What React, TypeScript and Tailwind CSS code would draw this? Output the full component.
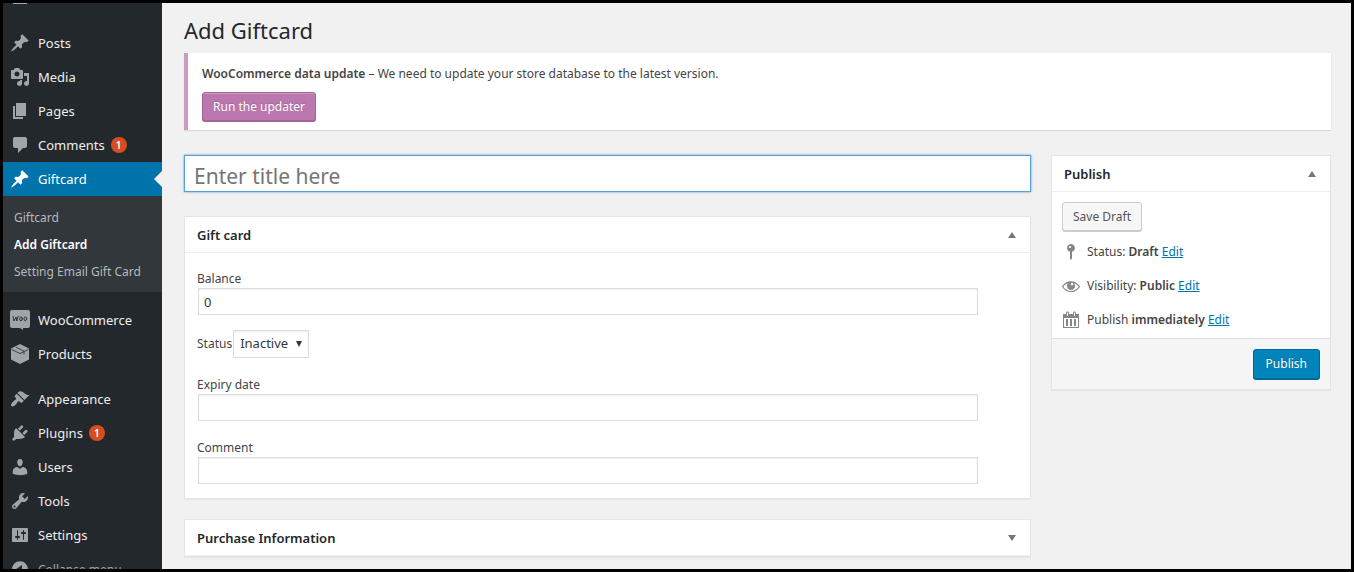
import { useId, useState } from "react";
import type { ReactNode } from "react";

// 20x20 glyphs of the admin icon set
const ICONS = {
  pin: "M10.44 3.02l1.82-1.82 6.36 6.35-1.83 1.82c-1.05-.68-2.48-.57-3.41.36l-.75.75c-.92.93-1.04 2.35-.35 3.41l-1.83 1.82-2.41-2.41-2.8 2.79c-.42.42-3.38 2.71-3.8 2.29s1.86-3.39 2.28-3.81l2.79-2.79L4.1 9.36l1.83-1.82c1.05.69 2.48.57 3.4-.36l.75-.75c.93-.92 1.05-2.35.36-3.41z",
  media: "M13 11V4c0-.55-.45-1-1-1h-1.67L9 1H5L3.67 3H2c-.55 0-1 .45-1 1v7c0 .55.45 1 1 1h10c.55 0 1-.45 1-1zM7 4.5c1.38 0 2.5 1.12 2.5 2.5S8.38 9.5 7 9.5 4.5 8.38 4.5 7 5.62 4.5 7 4.5zM14 6h5v10.5c0 1.38-1.12 2.5-2.5 2.5S14 17.88 14 16.5s1.12-2.5 2.5-2.5c.17 0 .34.02.5.05V9h-3V6zm-4 8.05V13h2v3.5c0 1.38-1.12 2.5-2.5 2.5S7 17.88 7 16.5 8.12 14 9.5 14c.17 0 .34.02.5.05z",
  page: "M6 15V2h10v13H6zm-1 1h8v2H3V5h2v11z",
  comment: "M5 2h10c1.1 0 2 .9 2 2v7c0 1.1-.9 2-2 2h-2l-5 5v-5H5c-1.1 0-2-.9-2-2V4c0-1.1.9-2 2-2z",
  appearance: "M14.48 11.06L7.41 3.99l1.5-1.5c.5-.56 2.3-.47 3.51.32 1.21.8 1.43 1.28 2.91 2.1 1.18.64 2.45 1.26 4.45.85zm-.71.71L6.7 4.7 4.93 6.47c-.39.39-.39 1.02 0 1.41l1.06 1.06c.39.39.39 1.03 0 1.42-.6.6-1.43 1.11-2.21 1.69-.35.26-.7.53-1.01.84C1.43 14.23.4 16.08 1.4 17.07c.99 1 2.84-.03 4.18-1.36.31-.31.58-.66.85-1.02.57-.78 1.08-1.61 1.69-2.21.39-.39 1.02-.39 1.41 0l1.06 1.06c.39.39 1.02.39 1.41 0z",
  plugins: "M13.11 4.36L9.87 7.6 8 5.73l3.24-3.24c.35-.34 1.05-.2 1.56.32.52.51.66 1.21.31 1.55zm-8 1.77l.91-1.12 9.01 9.01-1.19.84c-.71.71-2.63 1.16-3.82 1.16H6.14L4.9 17.26c-.59.59-1.54.59-2.12 0-.59-.58-.59-1.53 0-2.12l1.24-1.24v-3.88c0-1.13.4-3.19 1.09-3.89zm7.26 3.97l3.24-3.24c.34-.35 1.04-.21 1.55.31.52.51.66 1.21.31 1.55l-3.24 3.25z",
  users: "M10 9.25c-2.27 0-2.73-3.44-2.73-3.44C7 4.02 7.82 2 9.97 2c2.16 0 2.98 2.02 2.71 3.81 0 0-.41 3.44-2.68 3.44zm0 2.57L12.72 10c2.39 0 4.52 2.33 4.52 4.53v2.49s-3.65 1.13-7.24 1.13c-3.65 0-7.24-1.13-7.24-1.13v-2.49c0-2.25 1.94-4.48 4.47-4.48z",
  tools: "M16.68 9.77c-1.34 1.34-3.3 1.67-4.95.99l-5.41 6.52c-.99.99-2.59.99-3.58 0s-.99-2.59 0-3.57l6.52-5.42c-.68-1.65-.35-3.61.99-4.95 1.28-1.28 3.12-1.62 4.72-1.06l-2.89 2.89 2.82 2.82 2.86-2.87c.53 1.58.18 3.39-1.08 4.65zM3.81 16.21c.4.39 1.04.39 1.43 0 .4-.4.4-1.04 0-1.43-.39-.4-1.03-.4-1.43 0-.39.39-.39 1.03 0 1.43z",
  settings: "M18 16V4c0-.55-.45-1-1-1H3c-.55 0-1 .45-1 1v12c0 .55.45 1 1 1h14c.55 0 1-.45 1-1zM8 11h1c.55 0 1 .45 1 1s-.45 1-1 1H8v1.5c0 .28-.22.5-.5.5s-.5-.22-.5-.5V13H6c-.55 0-1-.45-1-1s.45-1 1-1h1V5.5c0-.28.22-.5.5-.5s.5.22.5.5V11zm5-2h-1c-.55 0-1-.45-1-1s.45-1 1-1h1V5.5c0-.28.22-.5.5-.5s.5.22.5.5V7h1c.55 0 1 .45 1 1s-.45 1-1 1h-1v5.5c0 .28-.22.5-.5.5s-.5-.22-.5-.5V9z",
  collapse: "M10 2.16c4.33 0 7.84 3.51 7.84 7.84s-3.51 7.84-7.84 7.84S2.16 14.33 2.16 10 5.67 2.16 10 2.16zm2 11.72V6.12L6.18 9.97z",
  status: "M14 6c0 1.86-1.28 3.41-3 3.86V16c0 1-2 2-2 2V9.86c-1.72-.45-3-2-3-3.86 0-2.21 1.79-4 4-4s4 1.79 4 4zM8 5c0 .55.45 1 1 1s1-.45 1-1-.45-1-1-1-1 .45-1 1z",
  visibility: "M18.3 9.5C15 4.9 8.5 3.8 3.9 7.2c-1.2.9-2.2 2.1-3 3.4.2.4.5.8.8 1.2 3.3 4.6 9.6 5.6 14.2 2.4.9-.7 1.7-1.4 2.4-2.4.3-.4.5-.8.8-1.2-.3-.4-.5-.8-.8-1.1zm-8.2-2.3c.5-.5 1.3-.5 1.8 0s.5 1.3 0 1.8-1.3.5-1.8 0-.5-1.3 0-1.8zm-.1 7.7c-3.1 0-6-1.6-7.7-4.2C3.5 9 5.1 7.8 7 7.2c-.7.8-1 1.7-1 2.7 0 2.2 1.7 4.1 4 4.1 2.2 0 4.1-1.7 4.1-4v-.1c0-1-.4-2-1.1-2.7 1.9.6 3.5 1.8 4.7 3.5-1.7 2.6-4.6 4.2-7.7 4.2z",
  calendar: "M15 4h3v14H2V4h3V3c0-.83.67-1.5 1.5-1.5S8 2.17 8 3v1h4V3c0-.83.67-1.5 1.5-1.5S15 2.17 15 3v1zM6 3v2.5c0 .28.22.5.5.5s.5-.22.5-.5V3c0-.28-.22-.5-.5-.5S6 2.72 6 3zm7 0v2.5c0 .28.22.5.5.5s.5-.22.5-.5V3c0-.28-.22-.5-.5-.5s-.5.22-.5.5zm4 14V8H3v9h14zM7 16V9H5v7h2zm4 0V9H9v7h2zm4 0V9h-2v7h2z",
};

function Icon({ name }: { name: keyof typeof ICONS }) {
  return (
    <svg viewBox="0 0 20 20" className="size-5 shrink-0" fill="currentColor" fillRule="evenodd" aria-hidden="true">
      <path d={ICONS[name]} />
    </svg>
  );
}

function WooIcon() {
  return (
    <svg viewBox="0 0 20 20" className="size-5 shrink-0" aria-hidden="true">
      <path fill="currentColor" d="M2 0h16a2 2 0 0 1 2 2v14a2 2 0 0 1-2 2h-5v2l-3-2H2a2 2 0 0 1-2-2V2a2 2 0 0 1 2-2z" />
      <g fill="none" stroke="#23282d" strokeWidth="0.9" strokeLinecap="round" strokeLinejoin="round">
        <path d="M3 6.5l1 4.5 2-4 .8 4 1.4-4.700" />
        <ellipse cx="11" cy="8.8" rx="1.3" ry="2" />
        <ellipse cx="15.3" cy="8.8" rx="1.3" ry="2" />
      </g>
    </svg>
  );
}

function BoxIcon() {
  return (
    <svg viewBox="0 0 20 20" className="size-5 shrink-0" aria-hidden="true">
      <path fill="currentColor" d="M10 0l9 4.5v11L10 20l-9-4.500V4.500z" />
      <g fill="none" stroke="#23282d" strokeWidth="0.8">
        <path d="M1.500 5.500L10 9.500l8.500-4" />
        <path d="M6 3.200l8 4v3.300" />
      </g>
    </svg>
  );
}

type MenuItemProps = {
  icon: ReactNode;
  label: string;
  count?: number;
  current?: boolean;
};

function MenuItem({ icon, label, count, current }: MenuItemProps) {
  return (
    <a
      href="#"
      className={
        current
          ? "relative flex h-[34px] items-center gap-2 bg-[#0073aa] pl-[7px] text-white"
          : "flex h-[34px] items-center gap-2 pl-[7px] text-[#a0a5aa]"
      }
    >
      {icon}
      <span className={current ? "pt-0.5 text-white" : "pt-0.5 text-[#eeeeee]"}>{label}</span>
      {count && (
        <span className="-ml-0.5 flex h-4 w-4 items-center justify-center rounded-full bg-[#d54e21] text-[10px] font-semibold text-white">
          {count}
        </span>
      )}
      {current && (
        <span className="absolute right-0 top-[9px] border-y-8 border-r-8 border-y-transparent border-r-[#f1f1f1]" />
      )}
    </a>
  );
}

function Sidebar() {
  return (
    <nav className="w-[159px] shrink-0 bg-[#23282d] text-[13px]">
      <div className="h-[23px] pl-2.5">
        <div className="h-px w-3.5 bg-[#a0a5aa]" />
      </div>
      <MenuItem icon={<Icon name="pin" />} label="Posts" />
      <MenuItem icon={<Icon name="media" />} label="Media" />
      <MenuItem icon={<Icon name="page" />} label="Pages" />
      <MenuItem icon={<Icon name="comment" />} label="Comments" count={1} />
      <MenuItem icon={<Icon name="pin" />} label="Giftcard" current />
      <ul className="mb-[11px] bg-[#32373c] pb-[7px] pt-2 text-[12px] leading-[27px] text-[#b4b9be]">
        <li className="pl-[11px]"><a href="#">Giftcard</a></li>
        <li className="pl-[11px]"><a href="#" className="font-semibold text-white">Add Giftcard</a></li>
        <li className="pl-[11px]"><a href="#">Setting Email Gift Card</a></li>
      </ul>
      <MenuItem icon={<WooIcon />} label="WooCommerce" />
      <MenuItem icon={<BoxIcon />} label="Products" />
      <div className="h-[11px]" />
      <MenuItem icon={<Icon name="appearance" />} label="Appearance" />
      <MenuItem icon={<Icon name="plugins" />} label="Plugins" count={1} />
      <MenuItem icon={<Icon name="users" />} label="Users" />
      <MenuItem icon={<Icon name="tools" />} label="Tools" />
      <MenuItem icon={<Icon name="settings" />} label="Settings" />
      <button className="flex h-[34px] items-center gap-2 pl-[7px] text-[12px] text-[#a0a5aa]">
        <Icon name="collapse" />
        <span className="pt-0.5">Collapse menu</span>
      </button>
    </nav>
  );
}

function Postbox({ title, closed = false, children }: { title: string; closed?: boolean; children?: ReactNode }) {
  const [open, setOpen] = useState(!closed);
  return (
    <section className="border border-[#e5e5e5] bg-white shadow-[0_1px_1px_rgba(0,0,0,0.04)]">
      <div className="flex h-9 items-center justify-between border-b border-[#eeeeee] pl-3 pr-3.5">
        <h2 className="pt-0.5 text-[13px] font-semibold text-[#23282d]">{title}</h2>
        <button type="button" aria-label={"Toggle panel: " + title} aria-expanded={open} onClick={() => setOpen(!open)}>
          <svg viewBox="0 0 8 6" className="h-1.5 w-2" fill="#72777c" aria-hidden="true">
            <path d={open ? "M4 0l4 6H0z" : "M0 0h8L4 6z"} />
          </svg>
        </button>
      </div>
      {open && children}
    </section>
  );
}

function TextField({ label, initial = "" }: { label: string; initial?: string }) {
  const id = useId();
  const [value, setValue] = useState(initial);
  return (
    <div>
      <label htmlFor={id} className="block h-5 leading-[22px]">{label}</label>
      <input
        id={id}
        type="text"
        value={value}
        onChange={(e) => setValue(e.target.value)}
        className="ml-px block h-[27px] w-[95%] border border-[#dddddd] bg-white px-[5px] text-[13px] text-[#32373c] shadow-[inset_0_1px_2px_rgba(0,0,0,0.07)] outline-none"
      />
    </div>
  );
}

function GiftCardBox() {
  return (
    <Postbox title="Gift card">
      <div className="px-3 pb-3.5 pt-[15px]">
        <TextField label="Balance" initial="0" />
        <div className="mb-4 mt-[15px] flex items-center gap-px">
          <label htmlFor="status">Status</label>
          <span className="relative">
            <select
              id="status"
              className="block h-7 w-[76px] appearance-none border border-[#dddddd] bg-white pl-1.5 text-[13px] text-[#32373c] shadow-[inset_0_1px_2px_rgba(0,0,0,0.07)]"
            >
              <option>Inactive</option>
              <option>Active</option>
            </select>
            <svg viewBox="0 0 6 6" className="pointer-events-none absolute right-[7px] top-[11px] size-1.5" fill="#32373c" aria-hidden="true">
              <path d="M0 0h6L3 6z" />
            </svg>
          </span>
        </div>
        <div className="flex flex-col gap-4">
          <TextField label="Expiry date" />
          <TextField label="Comment" />
        </div>
      </div>
    </Postbox>
  );
}

function PublishRow({ icon, label, value }: { icon: ReactNode; label: string; value: string }) {
  return (
    <div className="flex h-[34px] items-center gap-1.5 px-[9px]">
      <span className="text-[#82878c]">{icon}</span>
      <p>
        {label} <b className="font-semibold">{value}</b>{" "}
        <a href="#" className="text-[#0073aa] underline">Edit</a>
      </p>
    </div>
  );
}

function PublishBox() {
  return (
    <Postbox title="Publish">
      <div className="px-2.5 pb-1 pt-2.5">
        <button type="button" className="h-[29px] rounded-[3px] border border-[#cccccc] bg-[#f7f7f7] px-2.5 text-[#555555] shadow-[0_1px_0_#cccccc]">
          Save Draft
        </button>
      </div>
      <div className="pb-px">
        <PublishRow icon={<Icon name="status" />} label="Status:" value="Draft" />
        <PublishRow icon={<Icon name="visibility" />} label="Visibility:" value="Public" />
        <PublishRow icon={<Icon name="calendar" />} label="Publish" value="immediately" />
      </div>
      <div className="flex justify-end border-t border-[#dddddd] bg-[#f5f5f5] p-2.5">
        <button
          type="button"
          className="h-[30px] rounded-[3px] border border-[#006799] bg-[#0085ba] px-3 text-white shadow-[0_1px_0_#006799] [text-shadow:0_-1px_1px_#006799]"
        >
          Publish
        </button>
      </div>
    </Postbox>
  );
}

export default function App() {
  const [title, setTitle] = useState("");
  return (
    <div className="flex h-screen overflow-hidden border-[3px] border-black bg-[#f1f1f1] font-['Noto_Sans',sans-serif] text-[12px] text-[#444444]">
      <Sidebar />
      <main className="min-w-0 flex-1 pl-[22px] pr-5 pt-[11px]">
        <h1 className="text-[22px] leading-8 text-[#23282d]">Add Giftcard</h1>

        <div className="mt-[7px] border-l-4 border-[#cc99c2] bg-white px-3.5 pb-[9px] pt-[11px] shadow-[0_1px_1px_rgba(0,0,0,0.1)]">
          <p className="leading-5">
            <strong className="font-semibold">WooCommerce data update</strong> – We need to update your store database to the latest version.
          </p>
          <button
            type="button"
            className="mt-2 block h-[29px] rounded-[3px] border border-[#a36597] bg-[#bb77ae] px-2.5 text-white shadow-[inset_0_1px_0_rgba(255,255,255,0.25),0_1px_0_#a36597] [text-shadow:0_-1px_1px_#a36597]"
          >
            Run the updater
          </button>
        </div>

        <div className="mt-[25px] flex items-start gap-5">
          <div className="flex min-w-0 flex-1 flex-col">
            <input
              type="text"
              aria-label="Title"
              placeholder="Enter title here"
              value={title}
              onChange={(e) => setTitle(e.target.value)}
              className="h-[37px] w-full border border-[#5b9dd9] bg-white px-[9px] pt-1 text-[21px] shadow-[0_0_2px_rgba(30,140,190,0.8)] outline-none placeholder:text-[#757575]"
            />
            <div className="mt-6 flex flex-col gap-5">
              <GiftCardBox />
              <Postbox title="Purchase Information" closed />
            </div>
          </div>
          <aside className="w-[280px] shrink-0">
            <PublishBox />
          </aside>
        </div>
      </main>
    </div>
  );
}
